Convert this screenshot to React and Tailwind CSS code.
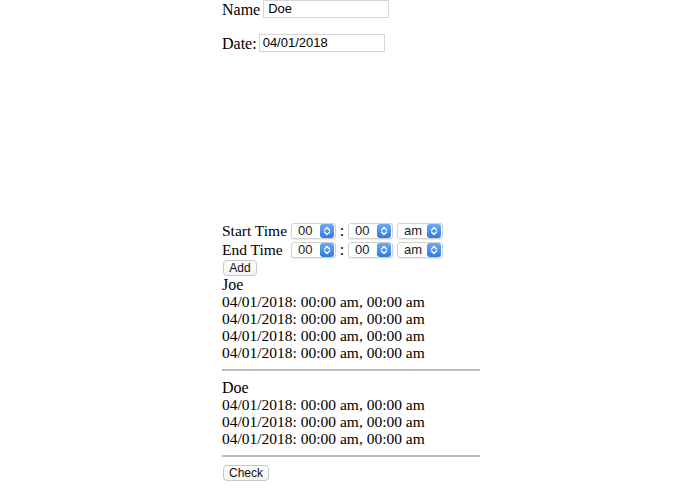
import React from "react";

const serif = { fontFamily: '"Liberation Serif", "Times New Roman", serif' };

function Spinner() {
  return (
    <div className="w-[14px] h-[14px] rounded-[3px] bg-gradient-to-b from-[#6aaaf5] to-[#2f7ae5] flex items-center justify-center">
      <svg width="8" height="10" viewBox="0 0 8 10" fill="none" stroke="white" strokeWidth="1.4" strokeLinecap="round" strokeLinejoin="round">
        <path d="M1.5 4 L4 1.5 L6.5 4" />
        <path d="M1.5 6 L4 8.5 L6.5 6" />
      </svg>
    </div>
  );
}

function Select({ value, width }) {
  return (
    <div
      className="h-[16px] flex items-center justify-between bg-white border border-[#d0d0d0] rounded-[3px] pl-[6px] pr-px shadow-[0_1px_1px_rgba(0,0,0,0.08)]"
      style={{ width }}
    >
      <span className="text-[13px] leading-none text-[#222] font-['Liberation_Sans',Arial,sans-serif]">{value}</span>
      <Spinner />
    </div>
  );
}

function TimeRow({ label }) {
  return (
    <div className="flex items-center h-[19px]">
      <span className="w-[69px] text-[15.5px] leading-[17px] text-black">{label}</span>
      <Select value="00" width="45px" />
      <span className="w-[12px] text-center text-[16px] leading-[17px]">:</span>
      <Select value="00" width="45px" />
      <div className="w-[4px]" />
      <Select value="am" width="46px" />
    </div>
  );
}

function Btn({ children, w }) {
  return (
    <button
      className="h-[16px] flex items-center justify-center bg-gradient-to-b from-white to-[#f3f3f3] border border-[#c8c8c8] rounded-[4px] text-[12px] leading-none text-[#111] font-['Liberation_Sans',Arial,sans-serif]"
      style={{ width: w }}
    >
      {children}
    </button>
  );
}

const entry = "04/01/2018: 00:00 am, 00:00 am";

function App() {
  return (
    <div className="min-h-[494px] bg-white text-black" style={serif}>
      <div className="ml-[222px] w-[258px] flex flex-col">
        <div className="flex items-center h-[18px]">
          <span className="text-[16px] leading-[17px] mr-[3px]">Name</span>
          <div className="w-[126px] h-[18px] border border-[#d6d6d6] px-[4px] flex items-center text-[13px] font-['Liberation_Sans',Arial,sans-serif]">Doe</div>
        </div>
        <div className="flex items-center h-[18px] mt-[16px]">
          <span className="text-[16px] leading-[17px] mr-[2px]">Date:</span>
          <div className="w-[126px] h-[18px] border border-[#d6d6d6] px-[3px] flex items-center text-[13px] font-['Liberation_Sans',Arial,sans-serif]">04/01/2018</div>
        </div>

        <div className="h-[169px]" />

        <TimeRow label="Start Time" />
        <TimeRow label="End Time" />
        <div className="ml-px mt-px">
          <Btn w="34px">Add</Btn>
        </div>

        <div className="text-[15.5px] leading-[17px]">
          <div className="text-[16px]">Joe</div>
          {[0, 1, 2, 3].map((i) => (
            <div key={i}>{entry}</div>
          ))}
        </div>
        <hr className="my-[8px] border-t-2 border-[#bdbdbd]" />
        <div className="text-[15.5px] leading-[17px]">
          <div className="text-[16px]">Doe</div>
          {[0, 1, 2].map((i) => (
            <div key={i}>{entry}</div>
          ))}
        </div>
        <hr className="my-[8px] border-t-2 border-[#bdbdbd]" />
        <div className="ml-px">
          <Btn w="46px">Check</Btn>
        </div>
      </div>
    </div>
  );
}

export default App;
